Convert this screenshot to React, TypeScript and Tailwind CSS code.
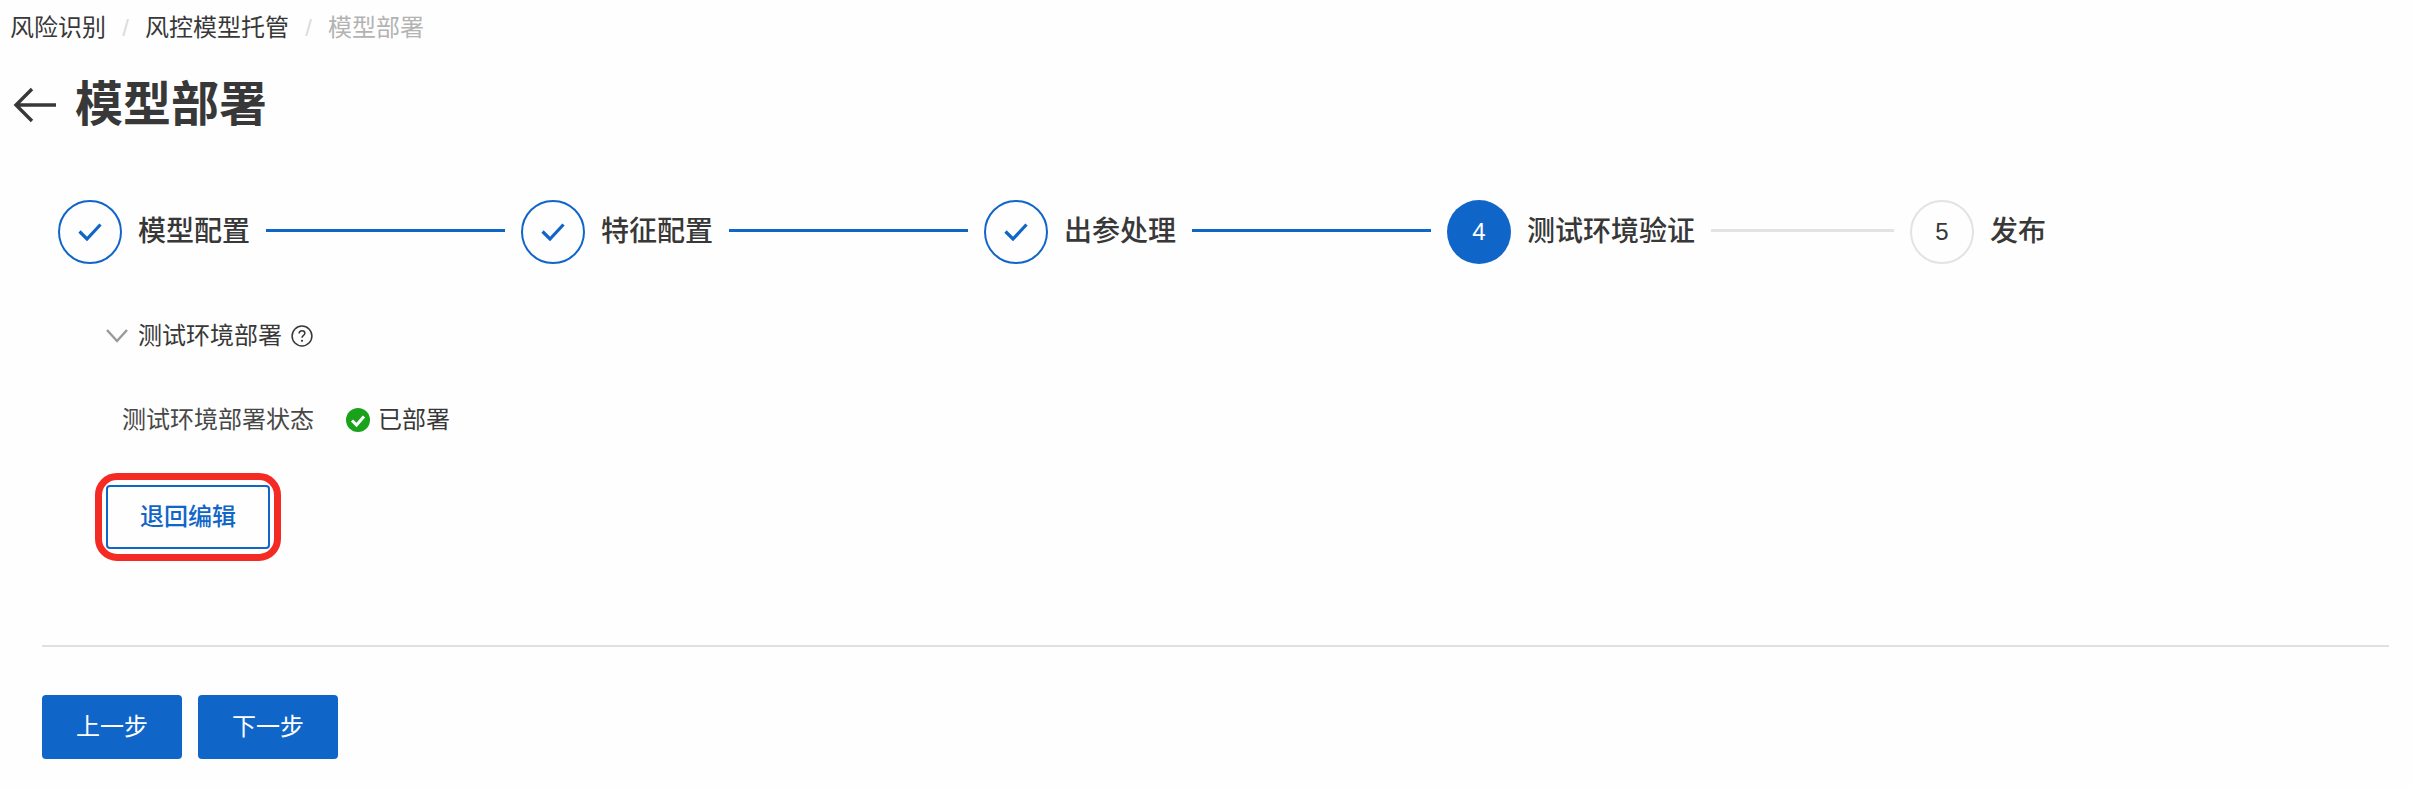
import { Fragment } from "react"

const font = "font-['Liberation_Sans','Noto_Sans_CJK_SC',sans-serif]"

const steps = [
    { label: "模型配置", status: "done" },
    { label: "特征配置", status: "done" },
    { label: "出参处理", status: "done" },
    { label: "测试环境验证", status: "active" },
    { label: "发布", status: "todo" },
]

function StepCircle({ status, index }: { status: string; index: number }) {
    if (status === "done") {
        return (
            <div className="w-16 h-16 shrink-0 rounded-full border-2 border-[#1066c8] flex items-center justify-center">
                <svg width="24" height="18" viewBox="0 0 24 18" fill="none">
                    <path d="M1.5 8.5L9 16L22.5 1.5" stroke="#1066c8" strokeWidth="3.2" />
                </svg>
            </div>
        )
    }
    if (status === "active") {
        return <div className="w-16 h-16 shrink-0 rounded-full bg-[#1066c8] text-white text-[24px] flex items-center justify-center">{index + 1}</div>
    }
    return <div className="w-16 h-16 shrink-0 rounded-full border-2 border-[#e3e3e3] text-[#383838] text-[24px] flex items-center justify-center">{index + 1}</div>
}

export default function App() {
    return (
        <div className={`${font} w-[2412px] h-[788px] overflow-hidden bg-[#fefefe] text-[#383838]`}>
            <div className="h-14 pl-[10px] flex items-center text-[24px]">
                <span>风险识别</span>
                <span className="w-[39px] text-center text-[#dcdcdc]">/</span>
                <span>风控模型托管</span>
                <span className="w-[39px] text-center text-[#dcdcdc]">/</span>
                <span className="text-[#b3b3b3]">模型部署</span>
            </div>

            <div className="mt-[21px] h-14 pl-[13px] flex items-center">
                <svg width="43" height="36" viewBox="0 0 43 36" fill="none" className="shrink-0">
                    <path d="M43 18H3M19 2L3 18L19 34" stroke="#383838" strokeWidth="3.4" />
                </svg>
                <h1 className="ml-[19px] text-[48px] font-bold leading-none">模型部署</h1>
            </div>

            <div className="mt-[67px] pl-[58px] flex">
                {steps.map((s, i) => (
                    <Fragment key={s.label}>
                        <div className={i < 4 ? "w-[463px] flex items-center" : "flex items-center"}>
                            <StepCircle status={s.status} index={i} />
                            <span className="ml-4 text-[28px] font-medium whitespace-nowrap">{s.label}</span>
                            {i < 4 && <div className={`ml-4 mr-4 mb-[3px] flex-1 h-[3px] ${s.status === "done" ? "bg-[#1066c8]" : "bg-[#e3e3e3]"}`} />}
                        </div>
                    </Fragment>
                ))}
            </div>

            <div className="mt-14 h-8 pl-[106px] flex items-center text-[24px]">
                <svg width="22" height="14" viewBox="0 0 22 14" fill="none" className="shrink-0">
                    <path d="M1 1L11 12L21 1" stroke="#999" strokeWidth="2.4" />
                </svg>
                <span className="ml-[10px]">测试环境部署</span>
                <svg width="22" height="22" viewBox="0 0 20 20" fill="none" className="ml-[9px] shrink-0">
                    <circle cx="10" cy="10" r="9" stroke="#383838" strokeWidth="1.4" />
                    <path d="M7.4 7.8C7.4 6.2 8.6 5.2 10 5.2C11.5 5.2 12.6 6.2 12.6 7.5C12.6 9.4 10 9.4 10 11.6" stroke="#383838" strokeWidth="1.4" />
                    <circle cx="10" cy="14.4" r="1" fill="#383838" />
                </svg>
            </div>

            <div className="mt-[52px] h-8 pl-[122px] flex items-center text-[24px]">
                <span className="text-[#484848]">测试环境部署状态</span>
                <svg width="24" height="24" viewBox="0 0 24 24" className="ml-8 shrink-0">
                    <circle cx="12" cy="12" r="12" fill="#1aa31a" />
                    <path d="M6 12.5L10.5 17L18 8.5" stroke="#fff" strokeWidth="3" fill="none" />
                </svg>
                <span className="ml-2">已部署</span>
            </div>

            <div className="mt-[49px] pl-[106px]">
                <button className="relative w-[164px] h-16 rounded border-2 border-[#1066c8] text-[24px] text-[#1066c8] font-medium">
                    退回编辑
                    <span className="absolute -inset-x-[13px] -inset-y-[14px] rounded-[22px] border-[7px] border-[#f42b25]" />
                </button>
            </div>

            <div className="mt-24 ml-[42px] w-[2347px] h-[2px] bg-[#e0e0e0]" />

            <div className="mt-12 pl-[42px] flex gap-4">
                <button className="w-[140px] h-16 rounded bg-[#1066c8] text-white text-[24px]">上一步</button>
                <button className="w-[140px] h-16 rounded bg-[#1066c8] text-white text-[24px]">下一步</button>
            </div>
        </div>
    )
}
